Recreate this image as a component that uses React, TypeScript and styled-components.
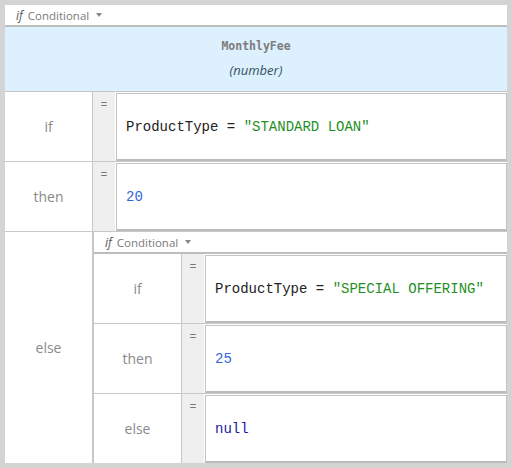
import styled, { createGlobalStyle } from "styled-components"

const Global = createGlobalStyle`
  html, body { margin: 0; padding: 0; background: #d4d4d4; }
  body { font-family: "Open Sans", "Liberation Sans", sans-serif; }
`

const Frame = styled.div`
  width: 512px;
  height: 468px;
  box-sizing: border-box;
  padding: 5px 5px 5px 5px;
  background: #d4d4d4;
`

const Cond = styled.div<{ $nested?: boolean }>`
  display: flex;
  flex-direction: column;
  background: #fff;
  height: 100%;
  border-left: ${p => (p.$nested ? "1px solid #c8c8c8" : "none")};
`

const CondHeader = styled.div`
  height: 20px;
  display: flex;
  align-items: center;
  gap: 5px;
  padding-left: 11px;
  border-bottom: 2px solid #bdbdbd;
  font-size: 11.5px;
  color: #7a7a7a;
  flex-shrink: 0;
`

const If = styled.span`
  font-style: italic;
  color: #555;
  font-size: 12px;
`

const Caret = styled.span`
  width: 0;
  height: 0;
  margin-left: 2px;
  border-left: 3.5px solid transparent;
  border-right: 3.5px solid transparent;
  border-top: 4px solid #888;
`

const TypeHead = styled.div`
  height: 64px;
  background: #dcf0fe;
  border-bottom: 1px solid #c4c4c4;
  display: flex;
  flex-direction: column;
  align-items: center;
  justify-content: center;
  gap: 8px;
  flex-shrink: 0;
`

const Field = styled.div`
  font-family: "DejaVu Sans Mono", "Liberation Mono", monospace;
  font-weight: bold;
  font-size: 11.5px;
  color: #7c7c7c;
`

const Type = styled.div`
  font-style: italic;
  font-size: 13px;
  color: #34525f;
`

const Row = styled.div<{ $grow?: boolean }>`
  display: grid;
  grid-template-columns: 88px 22px 1fr;
  min-height: 69px;
  flex: ${p => (p.$grow ? "1" : "0 0 69px")};
  border-bottom: 1px solid #c8c8c8;
  &:last-child { border-bottom: none; }
`

const Label = styled.div`
  display: flex;
  align-items: center;
  justify-content: center;
  border-right: 1px solid #c8c8c8;
  font-size: 14px;
  color: #8a8a8a;
`

const Eq = styled.div`
  background: #efefef;
  color: #777;
  font-size: 12px;
  text-align: center;
  padding-top: 4px;
`

const Value = styled.div`
  margin: 1px 0 0 1px;
  border: 1px solid #c4c4c4;
  border-bottom: 2px solid #bcbcbc;
  background: #fff;
  display: flex;
  align-items: center;
  padding-left: 9px;
  font-family: "Liberation Mono", monospace;
  font-size: 14px;
  color: #222;
  white-space: pre;
`

const Nest = styled.div`
  grid-column: 2 / 4;
  display: flex;
  flex-direction: column;
`

const Str = styled.span`color: #1f8f1f;`
const Num = styled.span`color: #3366dd;`
const Kw = styled.span`color: #1a1aa0;`

function Header() {
  return (
    <CondHeader>
      <If>if</If>
      <span>Conditional</span>
      <Caret />
    </CondHeader>
  )
}

export default function App() {
  return (
    <>
      <Global />
      <Frame>
        <Cond>
          <Header />
          <TypeHead>
            <Field>MonthlyFee</Field>
            <Type>(number)</Type>
          </TypeHead>
          <Row>
            <Label>if</Label>
            <Eq>=</Eq>
            <Value>ProductType = <Str>"STANDARD LOAN"</Str></Value>
          </Row>
          <Row>
            <Label>then</Label>
            <Eq>=</Eq>
            <Value><Num>20</Num></Value>
          </Row>
          <Row $grow>
            <Label>else</Label>
            <Nest>
              <Cond $nested>
                <Header />
                <Row>
                  <Label>if</Label>
                  <Eq>=</Eq>
                  <Value>ProductType = <Str>"SPECIAL OFFERING"</Str></Value>
                </Row>
                <Row>
                  <Label>then</Label>
                  <Eq>=</Eq>
                  <Value><Num>25</Num></Value>
                </Row>
                <Row $grow>
                  <Label>else</Label>
                  <Eq>=</Eq>
                  <Value><Kw>null</Kw></Value>
                </Row>
              </Cond>
            </Nest>
          </Row>
        </Cond>
      </Frame>
    </>
  )
}
